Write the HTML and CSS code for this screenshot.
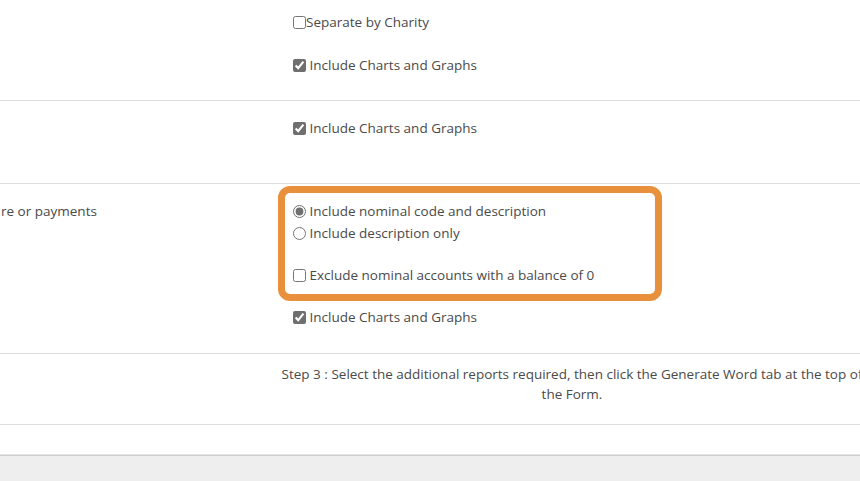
FILE: index.html
```html
<!DOCTYPE html>
<html>
<head>
<meta charset="utf-8">
<link rel="stylesheet" href="styles.css">
</head>
<body>
<div class="form">
  <div class="row row-a">
    <div class="label"></div>
    <div class="field">
      <div class="opt"><input type="checkbox" class="cb tight">Separate by Charity</div>
      <div class="opt opt-gap"><input type="checkbox" class="cb" checked> Include Charts and Graphs</div>
    </div>
  </div>
  <div class="row row-b">
    <div class="label"></div>
    <div class="field">
      <div class="opt"><input type="checkbox" class="cb" checked> Include Charts and Graphs</div>
    </div>
  </div>
  <div class="row row-c">
    <div class="label label-c">re or payments</div>
    <div class="field field-c">
      <div class="highlight">
        <div class="ropt"><input type="radio" name="nom" class="rd" checked> Include nominal code and description</div>
        <div class="ropt"><input type="radio" name="nom" class="rd"> Include description only</div>
        <div class="ropt ropt-gap"><input type="checkbox" class="cb"> Exclude nominal accounts with a balance of 0</div>
      </div>
      <div class="opt opt-after"><input type="checkbox" class="cb" checked> Include Charts and Graphs</div>
    </div>
  </div>
  <div class="row row-d">
    <div class="label"></div>
    <div class="step"><span class="nw">Step 3 : Select the additional reports required, then click the Generate Word tab at the top of</span><br>the Form.</div>
  </div>
  <div class="row row-e"></div>
</div>
<div class="footer"></div>
</body>
</html>
```
FILE: styles.css
```css
html, body {
  margin: 0;
  padding: 0;
  overflow: hidden;
  background: #ffffff;
}
body {
  font-family: "Open Sans", "Liberation Sans", sans-serif;
  font-size: 13.5px;
  color: #4a4a4a;
  width: 860px;
  height: 481px;
}
.form {
  width: 860px;
}
.row {
  display: grid;
  grid-template-columns: 278px 1fr;
  border-bottom: 1px solid #dedede;
}
.row-a { height: 100px; }
.row-b { height: 82px; }
.row-c { height: 169px; }
.row-d { height: 70px; }
.row-e { height: 29px; border-bottom-color: #e4e4e4; }
.label {
  padding-left: 1px;
  line-height: 20px;
}
.label-c { padding-top: 17px; }
.field {
  padding-left: 15px;
}
.row-a .field { padding-top: 12px; }
.row-b .field { padding-top: 17px; }
.opt {
  line-height: 20px;
  height: 20px;
  display: flex;
  align-items: center;
  white-space: pre;
}
.opt-gap { margin-top: 23px; }
.cb, .rd {
  width: 13px;
  height: 13px;
  margin: 0;
  accent-color: #6f6f6f;
  flex: none;
}
.field-c {
  padding-left: 0;
  padding-top: 2px;
}
.highlight {
  width: 362px;
  border: 7px solid #e8903b;
  border-radius: 12px;
  padding: 7px 0 8px 8px;
}
.ropt {
  height: 22px;
  line-height: 22px;
  display: flex;
  align-items: center;
  white-space: pre;
}
.ropt-gap { margin-top: 20px; }
.opt-after {
  margin-top: 6px;
  padding-left: 15px;
}
.step {
  width: 584px;
  padding-left: 2px;
  text-align: center;
  line-height: 20px;
  padding-top: 10px;
}
.nw {
  white-space: nowrap;
}
.footer {
  border-top: 1px solid #cfcfcf;
  background: #eeeeee;
  height: 40px;
}
```
